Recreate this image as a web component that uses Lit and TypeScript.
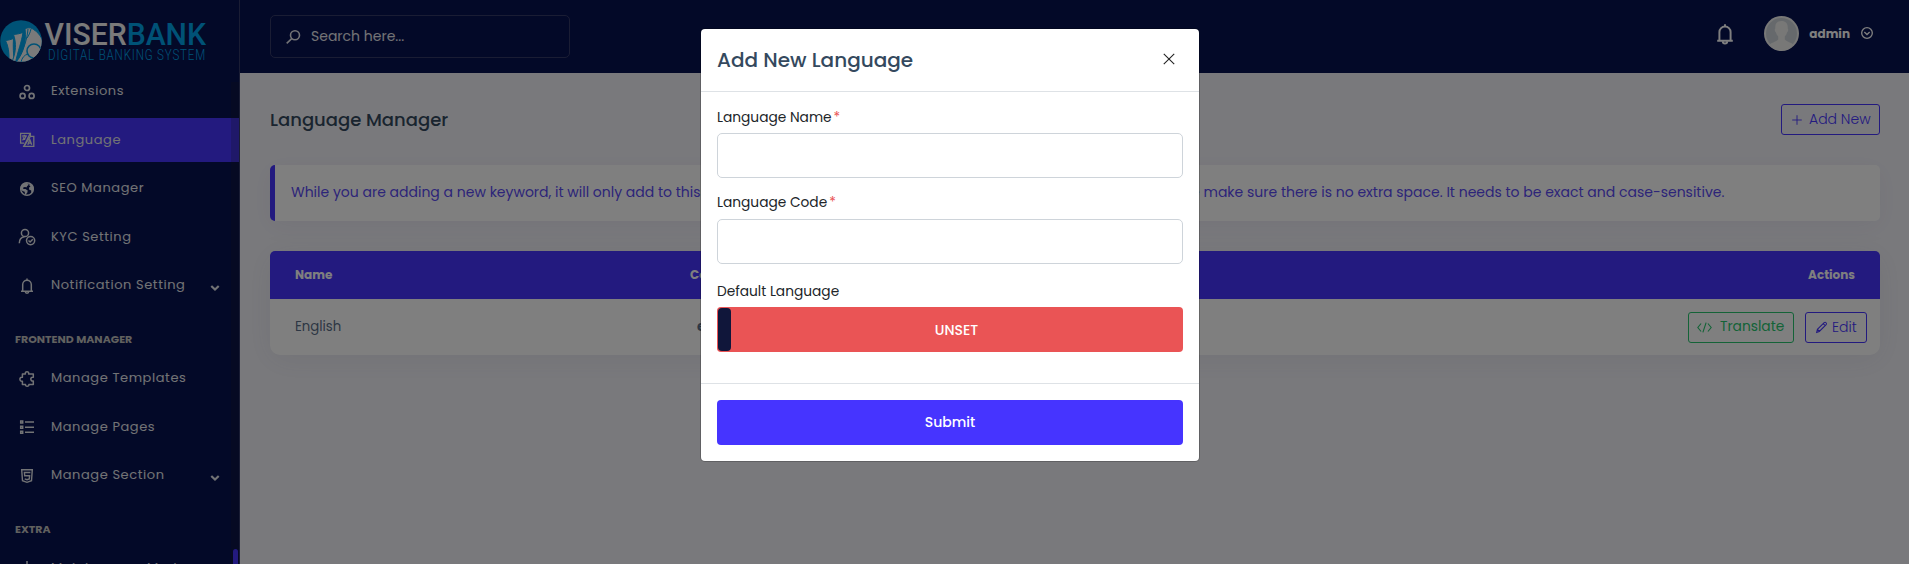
import { LitElement, html, css, svg, nothing } from "lit";
import { customElement } from "lit/decorators.js";
import { classMap } from "lit/directives/class-map.js";

const icons: Record<string, unknown> = {
  extensions: svg`<g fill="none" stroke="currentColor" stroke-width="1.700"><circle cx="10" cy="6" r="2.500"/><circle cx="5.600" cy="13.900" r="2.500"/><circle cx="14.600" cy="13.900" r="2.500"/></g>`,
  language: svg`<g fill="none" stroke="currentColor" stroke-width="1.300"><path d="M13.400 6.400V3.400H3.600v9.800h3.600"/><path d="M13.400 6.400h3.400v10H6.800z"/><path d="M13.200 3.400 7 16.400M5.200 6h4.600M7.400 4.700V6M9 6c-.4 2-1.900 3.500-3.600 4.200M6 7.400c.5 1 1.200 1.700 2.200 2.100"/><path d="M10.800 14.800l2-5.200 1.900 5.200M11.500 13.200h2.700"/></g>`,
  globe: svg`<circle cx="10" cy="10" r="6.300" fill="none" stroke="currentColor" stroke-width="1.500"/><path fill="currentColor" d="M9.800 3.400C6 3.300 3.400 6.200 3.300 9.700l2.200 2.300 2.200.8.3 3.600 2.400-2.800.3-2.100-2.200-1.500-2.300-.1.3-1.600 1.700-.4 1.200.6.900-1.400 1.500-1.400zM12.800 4.200l-.6 2 1.300 1.200-1.600 1.400.5 2.100 1.700.3.300 2.700 1.800-1.700.7-3.400-1-2.900z"/>`,
  kyc: svg`<g fill="none" stroke="currentColor" stroke-width="1.500"><circle cx="8" cy="6" r="3.600"/><path d="M2.300 16.200c0-3.700 1.900-6 5.200-6.500"/><circle cx="13.600" cy="13.600" r="4.100"/><path d="M11.500 13.500l1.600 1.500 2.700-2.800"/></g>`,
  bell: svg`<g fill="none" stroke="currentColor" stroke-width="1.500"><path d="M5.700 15V8.500a4.300 4.300 0 0 1 8.600 0V15M4 15.200h12M10 2.500v1.700"/><path d="M8.300 15.600a1.700 1.700 0 0 0 3.400 0"/></g>`,
  puzzle: svg`<path fill="none" stroke="currentColor" stroke-width="1.500" stroke-linejoin="round" d="M5.400 5.100h3c-.4-1.700.5-2.400 1.600-2.400s2 .7 1.600 2.400h4.700v3.200c-1.700-.4-2.500.6-2.500 1.800s.9 2.200 2.500 1.800v3.600h-4.400c.3 1-.6 1.700-1.700 1.700s-2-.7-1.700-1.700H5.400v-3.300c-1.700.4-2.500-.9-2.500-2.100s.9-2.200 2.500-1.800z"/>`,
  list: svg`<g fill="none" stroke="currentColor" stroke-width="1.500"><path d="M8 5h9M8 10.200h9M8 15.300h9"/><path d="M3.700 4h2v2h-2zM3.700 9.200h2v2h-2zM3.700 14.300h2v2h-2z"/></g>`,
  html5: svg`<g fill="none" stroke="currentColor" stroke-width="1.400"><path d="M4.700 3.800h10.600l-.8 10.900L10 16.300l-4.500-1.600z"/><path d="M13.400 6.500H7.400l.3 3.300h4.900l-.3 3.100-2.300.8-2.300-.8"/></g>`,
  robot: svg`<path fill="none" stroke="currentColor" stroke-width="1.500" d="M10 2v3.500M5 5.800h10v9H5z"/>`,
  search: svg`<g fill="none" stroke="currentColor" stroke-width="1.600"><circle cx="12" cy="8.200" r="4.500"/><path d="M8.700 11.600 3.700 16.400"/></g>`,
  plus: svg`<path fill="none" stroke="currentColor" stroke-width="1" d="M10 4.700v10.600M4.700 10h10.600"/>`,
  code: svg`<path fill="none" stroke="currentColor" stroke-width="1.200" d="M6.400 5.800 3 10l3.400 4.200M13.600 5.800 17 10l-3.400 4.200M11.700 4.800 8.300 15.200"/>`,
  pen: svg`<path fill="none" stroke="currentColor" stroke-width="1.100" d="M4.900 15.100l.8-3.200 7.100-7.100q1.100-.8 2 .2t.1 2l-7.200 7.200zM11.800 5.900l2.300 2.300M5.700 11.900l2.300 2.300"/>`,
  chevron: svg`<path fill="none" stroke="currentColor" stroke-width="3.600" d="M3.800 6.600 10 12.600 16.200 6.600"/>`,
  circleDown: svg`<g fill="none" stroke="currentColor" stroke-width="1.900"><circle cx="10" cy="10" r="7.600"/><path d="M6.200 8.600 10 12.200l3.800-3.600"/></g>`,
  close: svg`<path fill="none" stroke="currentColor" stroke-width="1.200" d="M4.200 4.200l11.600 11.600M15.800 4.200 4.200 15.800"/>`,
};

const icon = (name: string, cls = "") =>
  html`<svg class="icon ${cls}" viewBox="0 0 20 20">${icons[name]}</svg>`;

interface NavItem { icon: string; label: string; active?: boolean; sub?: boolean }
interface NavGroup { title?: string; items: NavItem[] }

const groups: NavGroup[] = [
  { items: [
    { icon: "extensions", label: "Extensions" },
    { icon: "language", label: "Language", active: true },
    { icon: "globe", label: "SEO Manager" },
    { icon: "kyc", label: "KYC Setting" },
    { icon: "bell", label: "Notification Setting", sub: true },
  ] },
  { title: "FRONTEND MANAGER", items: [
    { icon: "puzzle", label: "Manage Templates" },
    { icon: "list", label: "Manage Pages" },
    { icon: "html5", label: "Manage Section", sub: true },
  ] },
  { title: "EXTRA", items: [
    { icon: "robot", label: "Maintenance Mode" },
  ] },
];

@customElement("side-bar")
class SideBar extends LitElement {
  static styles = css`
    :host { display: block; position: relative; box-sizing: border-box; width: 240px; height: 564px; overflow: hidden; background: #071251; border-right: 1px solid #353b68; color: #e4e6ea; }
    .brand { display: flex; align-items: center; height: 69.500px; gap: 3px; padding-top: 7px; box-sizing: border-box; }
    .mark { width: 42px; height: 42px; margin-top: 5px; flex: none; }
    .word { width: 166px; height: 46px; flex: none; margin-top: 4px; overflow: visible; }
    .item { display: flex; align-items: center; height: 44px; margin-bottom: 4.500px; padding: 0 18px 0 17px; font-size: 13px; letter-spacing: .57px; }
    .item.active { background: #4634ff; }
    .icon { width: 20px; height: 20px; flex: none; }
    .label { margin-left: 14px; flex: 1; white-space: nowrap; line-height: 20px; padding-bottom: 1px; }
    .caret { width: 12px; height: 12px; margin-top: 5px; }
    .title { height: 44.700px; line-height: 54px; margin: 0; padding-left: 15px; font-size: 11px; font-weight: 700; color: #c2c2bf; }
    .track { position: absolute; top: 82px; bottom: 0; right: 0; width: 8px; background: rgba(34, 34, 34, .2); }
    .thumb { position: absolute; top: 467px; bottom: 0; left: 2px; width: 5px; border-radius: 3px 3px 0 0; background: #4634ff; }
  `;
  render() {
    return html`
      <div class="brand">
        <svg class="mark" viewBox="0 0 42 42">
          <defs><clipPath id="disc"><circle cx="21" cy="21" r="20.800"/></clipPath></defs>
          <circle cx="21" cy="21" r="20.800" fill="#00a5ec"/>
          <g clip-path="url(#disc)" fill="#f4f4f4" stroke="#00a5ec" stroke-width="1">
            <path d="M5.500 20.500c3-.3 5.500-1 8-2-.5 8-.2 15 1 25l-5.500-3c.2-8-.5-14-3.500-20z"/>
            <path d="M13.500 14.500c3.500-.2 6.500-1 9.500-2-1.500 10-5 18-7.500 30l-3-2c3.500-9 4-17 1-26z"/>
            <path d="M25 8.500c3-.8 5-1 7 0 4 2.500 9 6 11 14l1 22-31 1c9-9 14-21 12-37z"/>
            <path d="M28 9c-1 11-4 20-11 31M31 9c-1 4-2 6-4 9" fill="none"/>
            <circle cx="34" cy="31" r="7" fill="#f4f4f4" stroke-width="1.600"/>
            <path d="M28 34c-4 1-6 4-7 8" fill="none"/>
          </g>
        </svg>
        <svg class="word" viewBox="0 0 166 46">
          <text x="-0.500" y="27.500" font-family="Roboto" font-weight="500" font-size="30.500" fill="#f4f4f4" textLength="161.500" lengthAdjust="spacingAndGlyphs">VISER<tspan fill="#00a5ec">BANK</tspan></text>
          <text x="3" y="43.300" font-family="Roboto" font-weight="300" font-size="14" fill="#00a5ec" textLength="158" lengthAdjust="spacingAndGlyphs" letter-spacing="1">DIGITAL BANKING SYSTEM</text>
        </svg>
      </div>
      ${groups.map((g) => html`
        ${g.title ? html`<p class="title">${g.title}</p>` : nothing}
        ${g.items.map((i) => html`
          <div class=${classMap({ item: true, active: !!i.active })}>
            ${icon(i.icon)}<span class="label">${i.label}</span>
            ${i.sub ? icon("chevron", "caret") : nothing}
          </div>`)}`)}
      <div class="track"><div class="thumb"></div></div>
    `;
  }
}

@customElement("top-bar")
class TopBar extends LitElement {
  static styles = css`
    :host { display: flex; align-items: center; box-sizing: border-box; height: 73px; padding: 0 35px 0 30px; background: #071251; color: #fff; }
    .search { display: flex; align-items: center; box-sizing: border-box; width: 300px; height: 43px; padding-left: 12px; gap: 8px; border: 1px solid #353b68; border-radius: 5px; font-size: 14px; color: #e6e7ec; }
    .icon { width: 20px; height: 20px; flex: none; }
    .bell { width: 26px; height: 26px; }
    .avatar { width: 35px; height: 35px; margin: 0 10px 0 26px; }
    .name { font-size: 12px; font-weight: 700; }
    .icon.circle { width: 14px; height: 14px; margin: 0 0 1px 10px; }
    .end { display: flex; align-items: center; margin-left: auto; padding-bottom: 6px; }
  `;
  render() {
    return html`
      <div class="search">${icon("search")}<span>Search here...</span></div>
      <div class="end">
        ${icon("bell", "bell")}
        <svg class="avatar" viewBox="0 0 35 35">
          <circle cx="17.500" cy="17.500" r="17.500" fill="#f0f0ee"/>
          <circle cx="17.500" cy="17.500" r="15.500" fill="#ccd3d9"/>
          <path fill="#f0f0ee" d="M17.500 5c4.500 0 6.700 3 6.200 7.500 1 .5.400 3.300-.6 3.800-.4 2-1.300 3.200-2.300 4.100v3c2 2.600 6.700 2.600 8.800 5.600-3 3.600-7 5.500-12.100 5.500s-9.100-1.900-12.100-5.500c2.100-3 6.800-3 8.800-5.600v-3c-1-.9-1.900-2.100-2.300-4.100-1-.5-1.600-3.300-.6-3.800C10.800 8 13 5 17.500 5z"/>
        </svg>
        <span class="name">admin</span>
        ${icon("circleDown", "circle")}
      </div>
    `;
  }
}

@customElement("language-page")
class LanguagePage extends LitElement {
  static styles = css`
    :host { display: block; padding: 30px 29px 0 30px; }
    .head { display: flex; align-items: center; justify-content: space-between; height: 33px; }
    h1 { margin: 0; font-size: 18px; font-weight: 500; line-height: 33px; color: #34495e; }
    .btn { display: inline-flex; align-items: center; box-sizing: border-box; height: 31px; padding: 0 0 0 6px; border: 1px solid #4634ff; border-radius: 3px; color: #4634ff; font-size: 14px; white-space: nowrap; }
    .icon { width: 18px; height: 18px; flex: none; margin-right: 3px; }
    .add { width: 99px; font-weight: 300; }
    .edit { width: 62px; font-weight: 300; }
    .translate { width: 106px; border-color: #28c76f; color: #28c76f; font-size: 13.800px; }
    .translate .icon { width: 19px; height: 19px; margin-right: 6px; }
    .edit .icon { width: 19px; height: 19px; margin-right: 1px; }
    .note { display: flex; align-items: center; box-sizing: border-box; height: 56px; margin-top: 29px; padding: 0 0 2px 16px; border-left: 5px solid #4634ff; border-radius: 5px; background: #fff; box-shadow: 0 5px 25px rgba(70, 52, 140, .06); color: #5a4af2; font-size: 14px; white-space: nowrap; }
    .card { margin-top: 30px; border-radius: 5px 5px 10px 10px; background: #fff; box-shadow: 0 5px 30px rgba(54, 54, 96, .07); }
    .row { display: grid; grid-template-columns: 395px 1fr auto; align-items: center; height: 56px; padding: 0 13px 0 25px; box-sizing: border-box; font-size: 13.300px; color: #5b6e88; }
    .row.top { height: 48px; padding-right: 25px; background: #4634ff; border-radius: 5px 5px 0 0; color: #fff; font-size: 12px; font-weight: 700; }
    .code { padding-left: 7px; font-weight: 700; }
    .actions { display: flex; gap: 11px; }
  `;
  render() {
    return html`
      <div class="head">
        <h1>Language Manager</h1>
        <span class="btn add">${icon("plus")}<span>Add New</span></span>
      </div>
      <div class="note">While you are adding a new keyword, it will only add to this current language only. Please be careful on entering a keyword, please make sure there is no extra space. It needs to be exact and case-sensitive.</div>
      <div class="card">
        <div class="row top"><span>Name</span><span>Code</span><span>Actions</span></div>
        <div class="row">
          <span>English</span><span class="code">en</span>
          <span class="actions">
            <span class="btn translate">${icon("code")}<span>Translate</span></span>
            <span class="btn edit">${icon("pen")}<span>Edit</span></span>
          </span>
        </div>
      </div>
    `;
  }
}

@customElement("language-modal")
class LanguageModal extends LitElement {
  static styles = css`
    :host { display: flex; flex-direction: column; box-sizing: border-box; width: 498px; height: 432px; background: #fff; border-radius: 4px; box-shadow: 0 0 0 1px rgba(0, 0, 0, .2); color: #212529; font-size: 14px; }
    header { display: flex; align-items: center; justify-content: space-between; height: 62px; padding: 0 16px; box-sizing: border-box; }
    h2 { margin: 0; font-size: 20px; font-weight: 500; line-height: 24px; color: #34495e; }
    .icon { width: 18px; height: 18px; margin: 0 5px 2px 0; color: #222; }
    .body { height: 293px; box-sizing: border-box; padding: 15px 16px; border: solid #dee2e6; border-width: 1px 0; }
    label { display: block; line-height: 21px; font-size: 13.750px; }
    i { margin-left: 2px; font-style: normal; color: #ea5455; }
    .field { display: block; box-sizing: border-box; width: 100%; height: 45px; margin: 5px 0 14px; border: 1px solid #ced4da; border-radius: 5px; background: #fff; }
    .second { padding-bottom: 1px; }
    .toggle { display: flex; height: 45px; margin-top: 5px; padding: 1px; box-sizing: border-box; border-radius: 4px; background: #ea5455; color: #fff; font-weight: 500; line-height: 44px; }
    .knob { width: 13px; height: 43px; border-radius: 4px; background: #10163a; }
    .state { flex: 1; text-align: center; }
    .last { margin-top: 17px; }
    .submit { margin: 16px; height: 45px; border-radius: 4px; background: #4634ff; color: #fff; font-weight: 500; line-height: 45px; text-align: center; }
  `;
  render() {
    return html`
      <header><h2>Add New Language</h2>${icon("close")}</header>
      <div class="body">
        <label>Language Name<i>*</i></label><span class="field"></span>
        <label class="second">Language Code<i>*</i></label><span class="field"></span>
        <label class="last">Default Language</label>
        <div class="toggle"><span class="knob"></span><span class="state">UNSET</span></div>
      </div>
      <div class="submit">Submit</div>
    `;
  }
}

@customElement("app-root")
class AppRoot extends LitElement {
  static styles = css`
    :host { display: flex; position: relative; height: 564px; overflow: hidden; background: #f3f3f9; font-family: Poppins, Inter, sans-serif; }
    .main { flex: 1; min-width: 0; }
    .backdrop { position: absolute; inset: 0; display: flex; justify-content: center; align-items: flex-start; padding: 29px 9px 0 0; background: rgba(0, 0, 0, .5); }
  `;
  render() {
    return html`
      <side-bar></side-bar>
      <div class="main"><top-bar></top-bar><language-page></language-page></div>
      <div class="backdrop"><language-modal></language-modal></div>
    `;
  }
}
